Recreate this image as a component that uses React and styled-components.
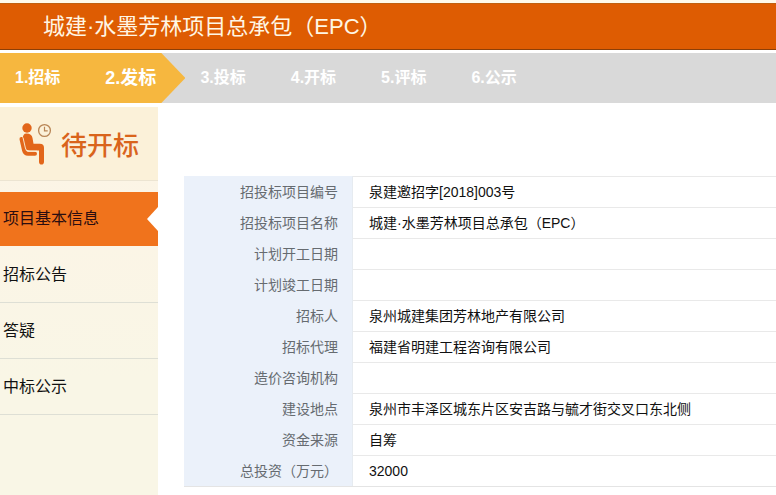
import React from "react";
import styled, { createGlobalStyle } from "styled-components";

const GlobalStyle = createGlobalStyle`
  * { box-sizing: border-box; }
  body {
    margin: 0;
    background: #fff;
    color: #111;
    font-family: "Liberation Sans", "Noto Sans CJK SC", sans-serif;
    font-size: 14px;
  }
`;

const Page = styled.div`
  display: flex;
  flex-direction: column;
  min-height: 100vh;
  border-top: 3px solid #fff9ea;
`;

const Header = styled.header`
  padding: 0 43px;
  background: #de5c02;
  border-top: 1px solid #c0600f;
  border-bottom: 1px solid #8c3f08;
`;

const Title = styled.h1`
  margin: 0;
  color: #fff6e4;
  font-size: 22px;
  font-weight: 400;
  line-height: 45px;
`;

const Steps = styled.nav`
  display: flex;
  margin: 3px 0 4px;
  background: #d9d9d9;
`;

const StepGroup = styled.ol`
  display: flex;
  gap: 45px;
  margin: 0;
  padding: 0 15px;
  list-style: none;
`;

const ReachedSteps = styled(StepGroup)`
  padding-right: 29px;
  background: #f6b73f;
  clip-path: polygon(0 0, calc(100% - 24px) 0, 100% 50%, calc(100% - 24px) 100%, 0 100%);
`;

const Step = styled.li`
  color: #fff;
  font-size: ${(p) => (p.$current ? "18px" : "16px")};
  font-weight: 700;
  line-height: 50px;
  white-space: nowrap;
`;

const Body = styled.div`
  display: flex;
  flex: 1;
`;

const Sidebar = styled.aside`
  flex: none;
  width: 158px;
  background: linear-gradient(#fdf4e6, #f9f6e6 70%);
`;

const Status = styled.div`
  display: flex;
  align-items: center;
  gap: 9px;
  height: 74px;
  margin-bottom: 11px;
  padding-left: 18px;
  background: #fbf1d9;
  border-bottom: 1px solid #ece4d2;
  color: #d9641c;
  font-size: 26px;
  font-weight: 500;
`;

const Menu = styled.ul`
  margin: 0;
  padding: 0;
  list-style: none;
`;

const MenuItem = styled.li`
  border-bottom: 1px solid ${(p) => (p.$active ? "transparent" : "#dedfd5")};
`;

const MenuLink = styled.a`
  display: flex;
  align-items: center;
  justify-content: space-between;
  padding-left: 3px;
  background: ${(p) => (p.$active ? "#f0731c" : "transparent")};
  color: ${(p) => (p.$active ? "#2b0d10" : "#111")};
  font-size: 16px;
  line-height: ${(p) => (p.$active ? "54px" : "55px")};
  text-decoration: none;
`;

const Notch = styled.span`
  width: 11px;
  height: 24px;
  background: #fff;
  clip-path: polygon(100% 0, 0 50%, 100% 100%);
`;

const Content = styled.main`
  flex: 1;
  padding: 69px 0 8px 26px;
`;

const InfoTable = styled.table`
  width: 100%;
  border-spacing: 0;
  border-bottom: 1px solid #e4e4e4;
`;

const Label = styled.th`
  width: 169px;
  height: 31px;
  padding: 0 14px;
  background: #ebf1fa;
  border-right: 1px solid #e6ebf0;
  color: #666b70;
  font-weight: 400;
  line-height: 20px;
  text-align: right;
`;

const Value = styled.td`
  padding: 0 16px;
  border-top: 1px solid #e9e9e9;
  line-height: 20px;
`;

const WaitingIcon = () => (
  <svg width="34" height="44" viewBox="0 0 34 44" fill="none" aria-hidden="true">
    <circle cx="9" cy="6" r="4.700" fill="#e2661a" />
    <path
      d="M8.500 11.500c3.600 0 5.500 1.600 6 4.500l1 5.800h6.200c3 0 4.300 1.500 4.300 4V40c0 3.400-5 3.400-5 0V28.500H12c-3.500 0-5.400-1.200-5.800-4L5 16.500c-.4-3 .8-5 3.500-5z"
      fill="#e2661a"
    />
    <path d="M3.500 17l2.600 11.500c.6 2.300 1.700 3.200 3.900 3.200h7" stroke="#e2661a" strokeWidth="4" strokeLinecap="round" strokeLinejoin="round" />
    <path d="M5 15.500l2.400 10.500c.6 2.200 1.600 3.200 3.800 3.200h8" stroke="#fbf1d9" strokeWidth="0.900" />
    <circle cx="26.500" cy="8.500" r="5.900" stroke="#b88555" strokeWidth="1.300" />
    <path d="M26.500 4.800v4h3.200" stroke="#b88555" strokeWidth="1.200" />
  </svg>
);

const reached = ["1.招标", "2.发标"];
const upcoming = ["3.投标", "4.开标", "5.评标", "6.公示"];
const menu = ["项目基本信息", "招标公告", "答疑", "中标公示"];
const rows = [
  ["招投标项目编号", "泉建邀招字[2018]003号"],
  ["招投标项目名称", "城建·水墨芳林项目总承包（EPC）"],
  ["计划开工日期", ""],
  ["计划竣工日期", ""],
  ["招标人", "泉州城建集团芳林地产有限公司"],
  ["招标代理", "福建省明建工程咨询有限公司"],
  ["造价咨询机构", ""],
  ["建设地点", "泉州市丰泽区城东片区安吉路与毓才街交叉口东北侧"],
  ["资金来源", "自筹"],
  ["总投资（万元）", "32000"],
];

export default function App() {
  return (
    <Page lang="zh-CN">
      <GlobalStyle />
      <Header>
        <Title>城建·水墨芳林项目总承包（EPC）</Title>
      </Header>
      <Steps>
        <ReachedSteps>
          {reached.map((s, i) => (
            <Step key={s} $current={i === reached.length - 1}>{s}</Step>
          ))}
        </ReachedSteps>
        <StepGroup start={3}>
          {upcoming.map((s) => (
            <Step key={s}>{s}</Step>
          ))}
        </StepGroup>
      </Steps>
      <Body>
        <Sidebar>
          <Status>
            <WaitingIcon />
            <span>待开标</span>
          </Status>
          <nav>
            <Menu>
              {menu.map((m, i) => (
                <MenuItem key={m} $active={i === 0}>
                  <MenuLink href="#" $active={i === 0}>
                    {m}
                    {i === 0 && <Notch />}
                  </MenuLink>
                </MenuItem>
              ))}
            </Menu>
          </nav>
        </Sidebar>
        <Content>
          <InfoTable>
            <tbody>
              {rows.map(([label, value]) => (
                <tr key={label}>
                  <Label scope="row">{label}</Label>
                  <Value>{value}</Value>
                </tr>
              ))}
            </tbody>
          </InfoTable>
        </Content>
      </Body>
    </Page>
  );
}
